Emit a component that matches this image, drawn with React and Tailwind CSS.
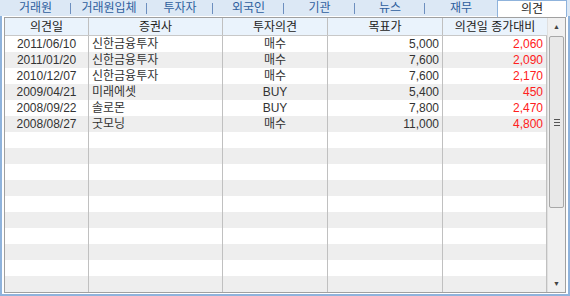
import React from "react";

const tabs = [
  { name: "거래원", w: "w-[71px]" },
  { name: "거래원입체", w: "w-[76px]" },
  { name: "투자자", w: "w-[66px]" },
  { name: "외국인", w: "w-[71px]" },
  { name: "기관", w: "w-[71px]" },
  { name: "뉴스", w: "w-[70px]" },
  { name: "재무", w: "w-[72px]" },
  { name: "의견", w: "w-[70px]", active: true },
];

const rows = [
  ["2011/06/10", "신한금융투자", "매수", "5,000", "2,060"],
  ["2011/01/20", "신한금융투자", "매수", "7,600", "2,090"],
  ["2010/12/07", "신한금융투자", "매수", "7,600", "2,170"],
  ["2009/04/21", "미래에셋", "BUY", "5,400", "450"],
  ["2008/09/22", "솔로몬", "BUY", "7,800", "2,470"],
  ["2008/08/27", "굿모닝", "매수", "11,000", "4,800"],
];

const font = { fontFamily: "'Liberation Sans', 'Noto Sans CJK KR', sans-serif" };

export default function App() {
  const filled = [...rows, ...Array(16 - rows.length).fill(null)];
  return (
    <div className="w-[570px] h-[296px] bg-[#dce8f5] flex flex-col text-[12px] leading-none" style={font}>
      {/* Tab strip */}
      <div className="h-[16px] flex items-stretch shrink-0">
        {tabs.map((t, i) => (
          <div
            key={t.name}
            className={`${t.w} flex items-center justify-center relative ${
              t.active
                ? "bg-white border-t border-l border-r border-[#8fb3dc] text-[#222] -mb-px"
                : "text-[#2f5f9e]"
            }`}
          >
            {t.name}
            {!t.active && i < tabs.length - 2 && (
              <span className="absolute right-0 top-[3px] h-[11px] w-px bg-[#6d8fbf]" />
            )}
          </div>
        ))}
      </div>

      {/* Body frame */}
      <div className="flex-1 border-l-2 border-r-2 border-b-2 border-[#8fb3dc] bg-white px-[2px] pt-px pb-px flex">
        <div className="flex-1 border border-[#a0a0a0] flex">
          <div className="flex-1 flex flex-col text-[#333]">
            {/* Header */}
            <div className="h-[18px] flex bg-[#eaf3fc] border-b border-[#c8c8c8] text-[#222]">
              <div className="w-[84px] border-r border-[#c0c0c0] flex items-center justify-center">의견일</div>
              <div className="w-[134px] border-r border-[#c0c0c0] flex items-center justify-center">증권사</div>
              <div className="w-[105px] border-r border-[#c0c0c0] flex items-center justify-center">투자의견</div>
              <div className="w-[115px] border-r border-[#c0c0c0] flex items-center justify-center">목표가</div>
              <div className="flex-1 flex items-center justify-center">의견일 종가대비</div>
            </div>
            {/* Rows */}
            {filled.map((r, i) => (
              <div key={i} className={`h-[16px] flex ${i % 2 === 1 ? "bg-[#eeeeee]" : "bg-white"}`}>
                <div className="w-[84px] border-r border-[#c0c0c0] flex items-center justify-center">{r && r[0]}</div>
                <div className="w-[134px] border-r border-[#c0c0c0] flex items-center pl-[3px]">{r && r[1]}</div>
                <div className="w-[105px] border-r border-[#c0c0c0] flex items-center justify-center">{r && r[2]}</div>
                <div className="w-[115px] border-r border-[#c0c0c0] flex items-center justify-end pr-[3px]">{r && r[3]}</div>
                <div className="flex-1 border-r border-[#c0c0c0] flex items-center justify-end pr-[3px] text-[#ff2020]">{r && r[4]}</div>
              </div>
            ))}
          </div>

          {/* Scrollbar */}
          <div className="w-[18px] bg-[#f0f0f0] flex flex-col border-l border-[#e0e0e0]">
            <div className="h-[17px] flex items-center justify-center text-[#444] text-[7px]">▲</div>
            <div className="flex-1 flex flex-col">
              <div className="h-[172px] mx-[1px] mt-px bg-[#e8e8e8] border border-[#a8a8a8] rounded-[2px] flex items-center justify-center">
                <div className="flex flex-col gap-[2px]">
                  <span className="w-[6px] h-px bg-[#555]" />
                  <span className="w-[6px] h-px bg-[#555]" />
                  <span className="w-[6px] h-px bg-[#555]" />
                </div>
              </div>
            </div>
            <div className="h-[17px] flex items-center justify-center text-[#444] text-[7px]">▼</div>
          </div>
        </div>
      </div>
    </div>
  );
}
